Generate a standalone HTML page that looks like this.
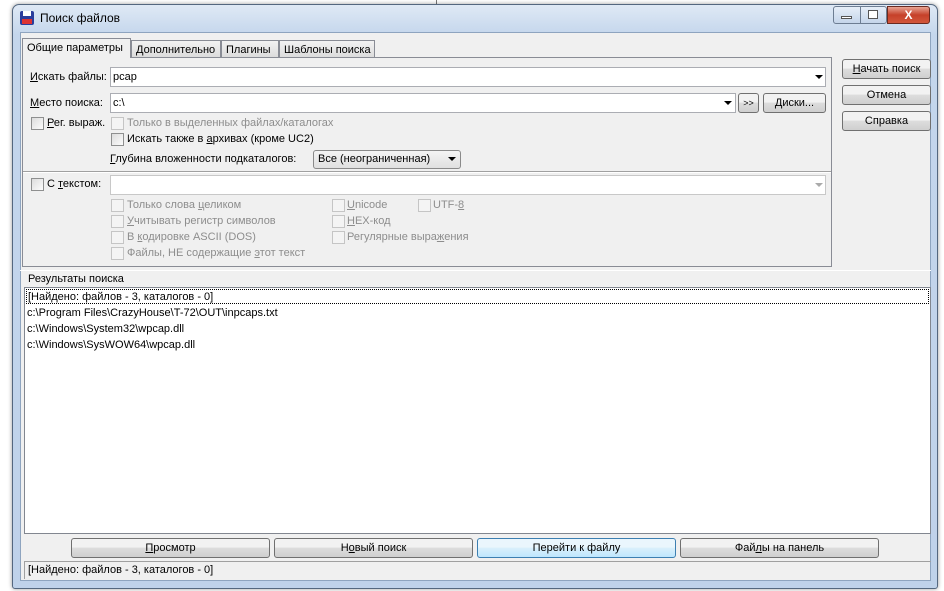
<!DOCTYPE html>
<html><head><meta charset="utf-8"><style>
*{margin:0;padding:0;box-sizing:border-box}
body{width:944px;height:591px;background:#fff;position:relative;overflow:hidden;font-family:"Liberation Sans","Noto Sans CJK SC",sans-serif;font-size:11px;color:#000}
.a{position:absolute}
.win{left:12px;top:4px;width:926px;height:585px;border:1px solid #54677f;border-radius:7px 7px 3px 3px;background:linear-gradient(#dfe9f5,#c4d6ec 30px,#bfd2ea);box-shadow:0 0 4px rgba(0,0,0,.4)}
.cont{left:20px;top:32px;width:911px;height:549px;background:#f0f0f0;border:1px solid #8ea4bf}
.tab{top:38px;height:20px;border:1px solid #898c95;background:linear-gradient(#f2f2f2,#dcdcdc);padding:3px 4px 0;white-space:nowrap}
.panel{left:22px;top:57px;width:810px;height:210px;border:1px solid #898c95;background:#f0f0f0}
.inp{background:#fff;border:1px solid #abadb3;height:20px}
.dd{width:0;height:0;border-left:4px solid transparent;border-right:4px solid transparent;border-top:4px solid #000}
.cb{width:13px;height:13px;border:1px solid #8e8f8f;background:linear-gradient(135deg,#dcdcdc,#fcfcfc)}
.dis{color:#8d8d8d}
.cbd{width:13px;height:13px;border:1px solid #c5c5c5;background:#f4f4f4}
.btn{border:1px solid #707070;border-radius:3px;background:linear-gradient(#f2f2f2 45%,#dddddd 50%,#cfcfcf);text-align:center;line-height:18px;height:20px}
u{text-decoration:underline}
</style></head><body>
<div class="a" style="left:436px;top:0;width:1px;height:5px;background:#777"></div>
<div class="a win"></div>
<!-- title -->
<div class="a" style="left:20px;top:11px;width:14px;height:14px;background:#2a3d9c;border-radius:2px"></div>
<div class="a" style="left:23px;top:11px;width:8px;height:5px;background:#fff"></div>
<div class="a" style="left:22px;top:19px;width:10px;height:5px;background:#d33"></div>
<div class="a" style="left:40px;top:11px;font-size:12px">Поиск файлов</div>
<div class="a" style="left:833px;top:6px;width:54px;height:18px;border:1px solid #6d7d92;border-radius:3px;background:linear-gradient(#e6eef8,#c5d5ea)"></div>
<div class="a" style="left:860px;top:6px;width:1px;height:18px;background:#6d7d92"></div>
<div class="a" style="left:841px;top:16px;width:11px;height:3px;border:1px solid #555;background:#fff"></div>
<div class="a" style="left:868px;top:10px;width:10px;height:9px;border:1px solid #555;background:#fff"></div>
<div class="a" style="left:887px;top:6px;width:43px;height:18px;border:1px solid #6a2a20;border-radius:0 3px 3px 0;background:linear-gradient(#e8a493,#c6412a 50%,#d2573c);color:#fff;font-weight:bold;text-align:center;font-size:12px;line-height:16px">X</div>
<div class="a cont"></div>
<!-- tabs -->
<div class="a panel"></div>
<div class="a tab" style="left:131px;width:90px;top:40px;height:18px">Дополнительно</div>
<div class="a tab" style="left:221px;width:58px;top:40px;height:18px">Плагины</div>
<div class="a tab" style="left:279px;width:96px;top:40px;height:18px">Шаблоны поиска</div>
<div class="a tab" style="left:22px;width:109px;height:20px;background:#f0f0f0;border-bottom:none;padding-top:3px">Общие параметры</div>
<!-- rows -->
<div class="a" style="left:30px;top:71px"><u>И</u>скать файлы:</div>
<div class="a inp" style="left:110px;top:67px;width:716px"></div>
<div class="a" style="left:113px;top:71px">pcap</div>
<div class="a dd" style="left:815px;top:75px"></div>
<div class="a" style="left:30px;top:97px"><u>М</u>есто поиска:</div>
<div class="a inp" style="left:110px;top:93px;width:626px"></div>
<div class="a" style="left:113px;top:97px">c:\</div>
<div class="a dd" style="left:724px;top:101px"></div>
<div class="a btn" style="left:738px;top:93px;width:21px;font-size:9px">&gt;&gt;</div>
<div class="a btn" style="left:763px;top:93px;width:63px"><u>Д</u>иски...</div>
<div class="a cb" style="left:31px;top:117px"></div>
<div class="a" style="left:47px;top:117px"><u>Р</u>ег. выраж.</div>
<div class="a cbd" style="left:111px;top:117px"></div>
<div class="a dis" style="left:127px;top:117px">Только в выделенных файлах/каталогах</div>
<div class="a cb" style="left:111px;top:133px"></div>
<div class="a" style="left:127px;top:133px">Искать также в <u>а</u>рхивах (кроме UC2)</div>
<div class="a" style="left:110px;top:153px"><u>Г</u>лубина вложенности подкаталогов:</div>
<div class="a btn" style="left:313px;top:150px;width:148px;height:19px;text-align:left;padding-left:4px;line-height:17px;border-color:#8a8a8a;background:linear-gradient(#f4f4f4,#e0e0e0)">Все (неограниченная)</div>
<div class="a dd" style="left:448px;top:157px"></div>
<div class="a" style="left:23px;top:171px;width:808px;height:2px;border-top:1px solid #a0a0a0;border-bottom:1px solid #fff"></div>
<div class="a cb" style="left:31px;top:178px"></div>
<div class="a" style="left:47px;top:178px">С <u>т</u>екстом:</div>
<div class="a inp" style="left:110px;top:175px;width:716px;border-color:#c8c8c8"></div>
<div class="a" style="left:815px;top:183px;width:0;height:0;border-left:4px solid transparent;border-right:4px solid transparent;border-top:4px solid #aaa"></div>
<div class="a cbd" style="left:111px;top:199px"></div><div class="a dis" style="left:127px;top:199px">Только слова <u>ц</u>еликом</div>
<div class="a cbd" style="left:111px;top:215px"></div><div class="a dis" style="left:127px;top:215px"><u>У</u>читывать регистр символов</div>
<div class="a cbd" style="left:111px;top:231px"></div><div class="a dis" style="left:127px;top:231px">В <u>к</u>одировке ASCII (DOS)</div>
<div class="a cbd" style="left:111px;top:247px"></div><div class="a dis" style="left:127px;top:247px">Файлы, НЕ содержащие <u>э</u>тот текст</div>
<div class="a cbd" style="left:332px;top:199px"></div><div class="a dis" style="left:347px;top:199px"><u>U</u>nicode</div>
<div class="a cbd" style="left:418px;top:199px"></div><div class="a dis" style="left:433px;top:199px">UTF-<u>8</u></div>
<div class="a cbd" style="left:332px;top:215px"></div><div class="a dis" style="left:347px;top:215px"><u>H</u>EX-код</div>
<div class="a cbd" style="left:332px;top:231px"></div><div class="a dis" style="left:347px;top:231px">Регулярные выра<u>ж</u>ения</div>
<!-- right buttons -->
<div class="a btn" style="left:842px;top:59px;width:89px"><u>Н</u>ачать поиск</div>
<div class="a btn" style="left:842px;top:85px;width:89px">Отмена</div>
<div class="a btn" style="left:842px;top:111px;width:89px">Справка</div>
<div class="a" style="left:20px;top:270px;width:911px;height:1px;background:#fff"></div>
<!-- results -->
<div class="a" style="left:28px;top:273px">Результаты поиска</div>
<div class="a" style="left:24px;top:287px;width:907px;height:247px;background:#fff;border:1px solid #828790"></div>
<div class="a" style="left:26px;top:289px;width:903px;height:15px;border:1px dotted #000"></div>
<div class="a" style="left:28px;top:291px;line-height:12px">[Найдено: файлов - 3, каталогов - 0]</div>
<div class="a" style="left:27px;top:307px">c:\Program Files\CrazyHouse\T-72\OUT\inpcaps.txt</div>
<div class="a" style="left:27px;top:323px">c:\Windows\System32\wpcap.dll</div>
<div class="a" style="left:27px;top:339px">c:\Windows\SysWOW64\wpcap.dll</div>
<!-- bottom buttons -->
<div class="a btn" style="left:71px;top:538px;width:199px"><u>П</u>росмотр</div>
<div class="a btn" style="left:274px;top:538px;width:199px">Н<u>о</u>вый поиск</div>
<div class="a btn" style="left:477px;top:538px;width:199px;border-color:#3c7fb1;background:linear-gradient(#eaf6fd 45%,#d9f0fc 50%,#bee6fd)">Перейти к файлу</div>
<div class="a btn" style="left:680px;top:538px;width:199px">Фай<u>л</u>ы на панель</div>
<div class="a" style="left:24px;top:561px;width:907px;height:18px;border-top:1px solid #a0a0a0;border-left:1px solid #a0a0a0"></div>
<div class="a" style="left:28px;top:564px">[Найдено: файлов - 3, каталогов - 0]</div>
</body></html>
